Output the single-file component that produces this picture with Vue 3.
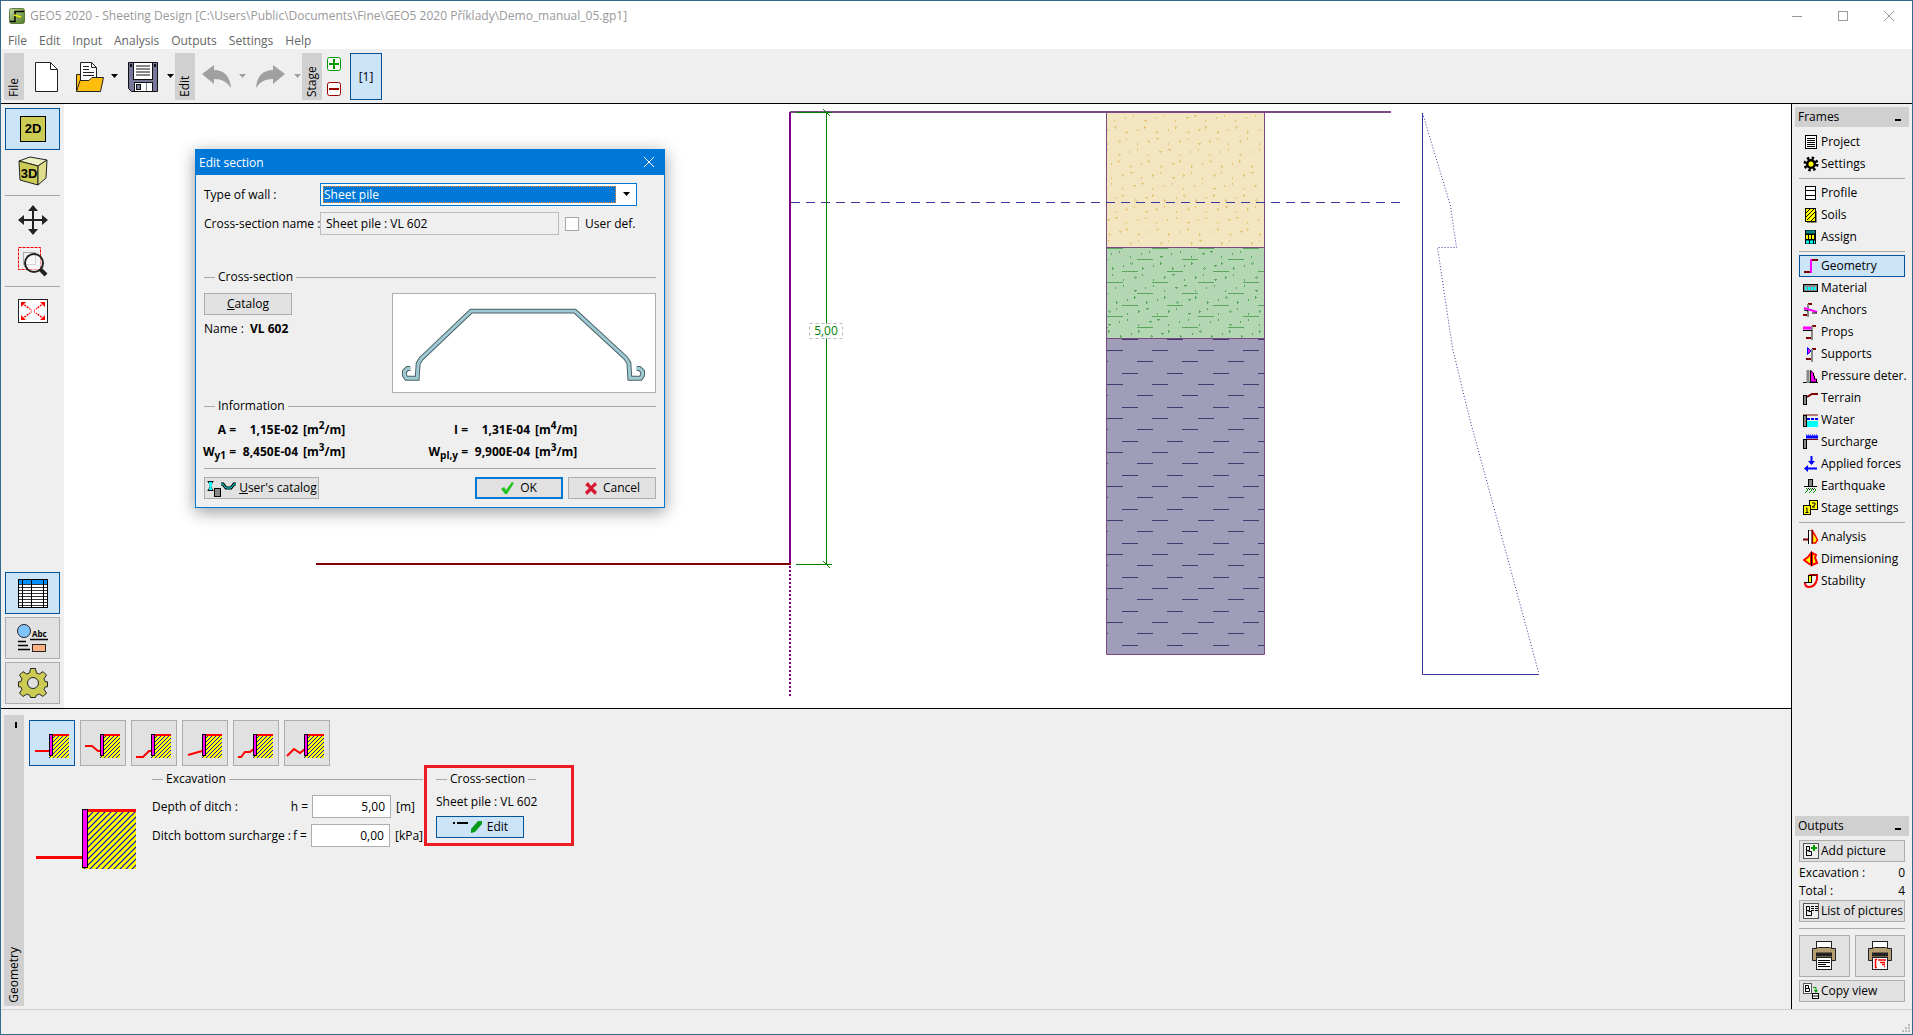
<script setup>
import { ref } from 'vue'

const menus = ['File', 'Edit', 'Input', 'Analysis', 'Outputs', 'Settings', 'Help']

const frames = [
  [
    { name: 'Project', icon: '<rect x="2.5" y="1.5" width="11" height="13" fill="#fff" stroke="#000"/><path d="M4 4.5h8M4 6.5h8M4 8.5h8M4 10.5h8M4 12.5h8" stroke="#000"/>' },
    { name: 'Settings', icon: '<circle cx="8" cy="8" r="6" fill="none" stroke="#000" stroke-width="3" stroke-dasharray="2.4 2.3"/><circle cx="8" cy="8" r="3.8" fill="#ff0" stroke="#000" stroke-width="2.5"/>' },
  ],
  [
    { name: 'Profile', icon: '<rect x="2.5" y="1.5" width="10" height="13" fill="#fff" stroke="#000"/><path d="M3 5.5h9M3 10.5h9" stroke="#000"/>' },
    { name: 'Soils', icon: '<path d="M4 15.5h9.5V4" stroke="#888" fill="none"/><rect x="2.5" y="1.5" width="10" height="13" fill="#ff0" stroke="#000"/><path d="M3 6l4-4M3 10l8-8M4 13l8-8M8 14l4-4" stroke="#000"/>' },
    { name: 'Assign', icon: '<rect x="2.5" y="1.5" width="10" height="13" fill="#000" stroke="#000"/><path d="M3 3h9" stroke="#088" stroke-width="3"/><path d="M3 8h9" stroke="#ff0" stroke-width="4" stroke-dasharray="2 1"/><path d="M3 13h9" stroke="#0ff" stroke-width="3" stroke-dasharray="3 1"/>' },
  ],
  [
    { name: 'Geometry', icon: '<path d="M1 14h6M9 2h6" stroke="#800000" stroke-width="2"/><path d="M8 1v14" stroke="#f0f" stroke-width="2"/>' },
    { name: 'Material', icon: '<rect x="0.5" y="4.5" width="14" height="7" fill="#888" stroke="#000"/><path d="M2 8.5h12" stroke="#0ff" stroke-width="3" stroke-dasharray="2 1"/>' },
    { name: 'Anchors', icon: '<path d="M0 13h5M5 2h4" stroke="#800000" stroke-width="2"/><path d="M5 2v13" stroke="#888" stroke-width="2"/><path d="M1 6l13 4" stroke="#f0f" stroke-width="2"/><path d="M1 8l4 1M9 11h5" stroke="#000"/>' },
    { name: 'Props', icon: '<path d="M3 14h5M9 2h4" stroke="#800000" stroke-width="2"/><path d="M9 2v14" stroke="#888" stroke-width="2"/><path d="M0 4h8" stroke="#f0f" stroke-width="3"/><path d="M0 6.5h9" stroke="#000"/>' },
    { name: 'Supports', icon: '<path d="M3 13h5M9 3h4" stroke="#800000" stroke-width="2"/><path d="M9 3v13" stroke="#888" stroke-width="2"/><path d="M4.5 1.5v7L8 5z" fill="#f0f" stroke="#00f"/>' },
    { name: 'Pressure deter.', icon: '<path d="M0 14.5h15" stroke="#000"/><path d="M5 2v13" stroke="#888" stroke-width="3"/><path d="M7.5 2.5V14h6v-3h-2V8h-1V5z" fill="#f0f" stroke="#000"/>' },
    { name: 'Terrain', icon: '<path d="M4 7l5-3h6" stroke="#800000" stroke-width="2" fill="none"/><rect x="0.5" y="5.5" width="3" height="9" fill="#888" stroke="#000"/>' },
    { name: 'Water', icon: '<path d="M0 3h15" stroke="#800000"/><path d="M4 9h11v6H4z" fill="#0ff"/><path d="M4 7h11" stroke="#00f" stroke-width="2" stroke-dasharray="3 1"/><rect x="0.5" y="3.5" width="3" height="11" fill="#888" stroke="#000"/>' },
    { name: 'Surcharge', icon: '<path d="M3 3h12" stroke="#00f" stroke-width="3"/><path d="M3 1h12" stroke="#00f" stroke-dasharray="1 1"/><path d="M3 5.5h12" stroke="#800000"/><rect x="0.5" y="5.5" width="3" height="9" fill="#888" stroke="#000"/>' },
    { name: 'Applied forces', icon: '<path d="M8.5 0v8M3 12.5h11" stroke="#00f" stroke-width="2"/><path d="M5 5h7L8.5 9zM1 12.5L5 9v7z" fill="#00f"/>' },
    { name: 'Earthquake', icon: '<rect x="5.5" y="1.5" width="4" height="7" fill="#888" stroke="#000"/><path d="M1 8.5h13" stroke="#000"/><path d="M3 10l2 2-3 3M7 10l2 2-3 3M11 10l2 2-3 3" stroke="#090" fill="none"/><path d="M5 10l2 2M9 10l2 2" stroke="#000"/>' },
    { name: 'Stage settings', icon: '<rect x="6.5" y="0.5" width="8" height="9" fill="#ff0" stroke="#000"/><rect x="0.5" y="5.5" width="7" height="9" fill="#ff0" stroke="#000"/><path d="M9 3h3v2l-3 2h3M3 8h1v4M2.5 12.5h3" stroke="#000" fill="none"/>' },
  ],
  [
    { name: 'Analysis', icon: '<path d="M0 10.5h5M5 2.5h5" stroke="#800000" stroke-width="2"/><path d="M5 2h4v13H5z" fill="#fff"/><path d="M5.5 1v14" stroke="#000"/><path d="M9.5 2l3 5 2 4-2 3h-3z" fill="#ff0" stroke="#f00" stroke-width="1.5"/><path d="M9 1v14" stroke="#000"/>' },
    { name: 'Dimensioning', icon: '<path d="M8 2L5 6 1 9l4 3 3 2zM9 2l4 2-1 3 1 2 1 3-5 2z" fill="#ff0" stroke="#f00" stroke-width="2"/><path d="M8.5 1v14" stroke="#000"/>' },
    { name: 'Stability', icon: '<path d="M6 2h8v4c-1 5-3 8-8 8-2 0-4-1-4-4" fill="none" stroke="#f00" stroke-width="2"/><path d="M9 2h5" stroke="#800000" stroke-width="2"/><path d="M1 9.5h5" stroke="#000"/><rect x="5.5" y="2.5" width="3" height="7" fill="#ff0" stroke="#000"/>' },
  ],
]

const shapes = [
  'M5 30H19',
  'M4 25h7l6 5h3',
  'M4 36h7l6-6h2',
  'M5 34l7-2 7-2',
  'M4 36h3l4-5h5l5-4',
  'M2 35l7-7 6 4 5-4h2',
]
const activeShape = ref(0)

const wallType = ref('Sheet pile')
const sectionName = ref('Sheet pile : VL 602')
const userDefined = ref(false)
const depth = ref('5,00')
const surcharge = ref('0,00')

/* Soil column hatching: staggered dashes and grains */
const COLUMN_LEFT = 1107
const COLUMN_RIGHT = 1264

function dashes(top, bottom) {
  const starts = [1107, 1137, 1122]
  let d = ''
  for (let n = 0; ; n++) {
    const y = 248 + Math.round((n * 34) / 3)
    if (y >= bottom) break
    if (y < top) continue
    for (let k = -1; k < 4; k++) {
      const x = starts[n % 3] + Math.round((k * 136) / 3)
      const from = Math.max(x, COLUMN_LEFT)
      const to = Math.min(x + 16, COLUMN_RIGHT)
      if (to > from) d += `M${from} ${y}h${to - from}v1h${from - to}z`
    }
  }
  return d
}

function grains(top, bottom) {
  const rows = [
    [0, 24, 1], [3, 17, 0], [5, 36, 1], [12, 36, 0], [14, 28, 1],
    [17, 17, 0], [23, 17, 0], [25, 39, 0], [28, 28, 0],
  ]
  const px = (x, y, w, h) => `M${x} ${y}h${w}v${h}h${-w}z`
  let d = ''
  for (let k = -1; k < 8; k++) {
    rows.forEach(([dy, dx, big], r) => {
      const y = 126 + k * 34 + dy
      if (y < top + 1 || y > bottom - 3) return
      for (let i = -2; i < 6; i++) {
        const x = 1090 + dx + k * 4 + Math.round(i * 30.3)
        if (x < COLUMN_LEFT || x > COLUMN_RIGHT - 3) continue
        const special = (i + r + k + 8) % 4 === 0
        if (big && special) d += px(x + 1, y, 1, 1) + px(x, y + 1, 1, 1) + px(x + 2, y + 1, 1, 1) + px(x + 1, y + 2, 1, 1)
        else if (big) d += px(x, y, 1, 3) + px(x + 1, y + 1, 1, 1)
        else if (special) d += px(x, y, 3, 1) + px(x + 1, y + 1, 1, 1)
        else d += px(x, y, 1, 2)
      }
    })
  }
  return d
}
</script>

<template>
  <div class="window">
    <svg class="defs" aria-hidden="true">
      <defs>
        <pattern id="hatch-small" width="4" height="4" patternUnits="userSpaceOnUse">
          <rect width="4" height="4" fill="#ff0" />
          <path d="M-1 1l2-2M-1 5l6-6M3 5l2-2" stroke="#00c" />
        </pattern>
        <pattern id="hatch-large" width="6" height="6" patternUnits="userSpaceOnUse">
          <rect width="6" height="6" fill="#ff0" />
          <path d="M-1 1l2-2M-1 7l8-8M5 7l2-2" stroke="#00c" stroke-width="1.2" />
        </pattern>
      </defs>
    </svg>

    <header class="titlebar">
      <svg width="16" height="16" viewBox="0 0 16 16">
        <defs><linearGradient id="app-g" x1="0" x2="1" y1="0" y2="1"><stop offset="0" stop-color="#c4dba0" /><stop offset="1" stop-color="#4d7a22" /></linearGradient></defs>
        <rect x="0.5" y="0.5" width="15" height="15" rx="2" fill="url(#app-g)" stroke="#5f7d3a" />
        <path d="M1 13.500h5V3.500h9" fill="none" stroke="#000" stroke-width="1.500" />
        <path d="M5 7l7 2" stroke="#ee0" stroke-width="1.500" />
      </svg>
      <h1>GEO5 2020 - Sheeting Design [C:\Users\Public\Documents\Fine\GEO5 2020 Příklady\Demo_manual_05.gp1]</h1>
      <div class="window-controls">
        <button type="button" aria-label="Minimize"><svg width="11" height="11"><path d="M0 5.500h10" stroke="#999" /></svg></button>
        <button type="button" aria-label="Maximize"><svg width="11" height="11"><rect x="0.5" y="0.5" width="9" height="9" fill="none" stroke="#999" /></svg></button>
        <button type="button" aria-label="Close"><svg width="11" height="11"><path d="M0 0l10 10M10 0L0 10" stroke="#999" /></svg></button>
      </div>
    </header>

    <nav class="menubar">
      <button v-for="m in menus" :key="m" type="button">{{ m }}</button>
    </nav>

    <div class="toolbar">
      <span class="strip">File</span>
      <button type="button" class="tool new" aria-label="New">
        <svg width="23" height="30"><path d="M0.500 0.500h15l7 7v22h-22z" fill="#fff" stroke="#222" /><path d="M15.500 0.500v7h7" fill="none" stroke="#222" /></svg>
      </button>
      <button type="button" class="tool open" aria-label="Open">
        <svg width="28" height="30">
          <path d="M0.500 29V12.500h6l2 3h18V20" fill="#ffbe0d" stroke="#222" />
          <path d="M4.500 19V0.500h11l5 5V17l-8 3z" fill="#fff" stroke="#222" /><path d="M15.500 0.500v5h5M7 4.500h6M7 7.500h6M7 10.500h11M7 13.500h11" fill="none" stroke="#222" />
          <path d="M4 18.500h9l3-3h11.500L24.500 29.500H0.500z" fill="#ffbe0d" stroke="#222" />
        </svg>
      </button>
      <button type="button" class="caret" aria-label="Recent files"><svg width="7" height="5"><path d="M0 0h7L3.500 4z" /></svg></button>
      <button type="button" class="tool save" aria-label="Save">
        <svg width="30" height="30">
          <path d="M0.500 0.500h29v29H3.500l-3-3z" fill="#777799" stroke="#111" />
          <rect x="5.500" y="0.500" width="19" height="17" fill="#fff" stroke="#111" />
          <path d="M8 4h14M8 7h14M8 10h14M8 13h14" stroke="#111" /><path d="M2 2h2v3H2zM26 2h2v3h-2z" fill="#111" />
          <rect x="6.500" y="20.500" width="18" height="9" fill="#fff" stroke="#111" /><rect x="8.500" y="22.500" width="4" height="5" fill="#779" stroke="#111" /><path d="M18.500 21v8" stroke="#779" />
        </svg>
      </button>
      <button type="button" class="caret" aria-label="Save options"><svg width="7" height="5"><path d="M0 0h7L3.500 4z" /></svg></button>
      <span class="strip">Edit</span>
      <button type="button" class="tool undo" aria-label="Undo" disabled>
        <svg width="29" height="24"><path d="M0 9L12 0v5c10 0 16 6 17 18-4-6-9-9-17-9v5z" fill="#a0a0a0" /></svg>
      </button>
      <button type="button" class="caret" aria-label="Undo list" disabled><svg width="7" height="5"><path d="M0 0h7L3.500 4z" /></svg></button>
      <button type="button" class="tool redo" aria-label="Redo" disabled>
        <svg width="29" height="24"><path d="M29 9L17 0v5C7 5 1 11 0 23c4-6 9-9 17-9v5z" fill="#a0a0a0" /></svg>
      </button>
      <button type="button" class="caret" aria-label="Redo list" disabled><svg width="7" height="5"><path d="M0 0h7L3.500 4z" /></svg></button>
      <span class="strip">Stage</span>
      <div class="stage-edit">
        <button type="button" aria-label="Add stage"><svg width="14" height="14"><rect x="0.5" y="0.5" width="13" height="13" rx="2" fill="#fff" stroke="#090" /><path d="M2 7h10M7 2v10" stroke="#090" stroke-width="2" /></svg></button>
        <button type="button" aria-label="Remove stage"><svg width="14" height="14"><rect x="0.5" y="0.5" width="13" height="13" rx="2" fill="#fff" stroke="#900" /><path d="M2 7h10" stroke="#900" stroke-width="2" /></svg></button>
      </div>
      <button type="button" class="stage active">[1]</button>
    </div>

    <div class="main">
      <div class="center">
        <div class="workspace">
          <aside class="view-tools">
            <button type="button" class="framed active" aria-label="2D view">
              <svg width="26" height="26"><rect x="0.5" y="0.5" width="25" height="25" fill="#cc5" stroke="#000" /><text x="13" y="17" text-anchor="middle" class="cube-label">2D</text></svg>
            </button>
            <button type="button" aria-label="3D view">
              <svg width="30" height="30"><path d="M1 5l11-4 17 3-9 6z" fill="#efefc4" stroke="#222" /><path d="M1 5l19 5v19L2 24z" fill="#cc5" stroke="#222" /><path d="M20 10l9-6-1 18-8 7z" fill="#dfdf8c" stroke="#222" /><text x="11" y="22" text-anchor="middle" class="cube-label">3D</text></svg>
            </button>
            <hr>
            <button type="button" aria-label="Move view">
              <svg width="30" height="30"><path d="M3 15h24M15 3v24" stroke="#222" stroke-width="2" /><path d="M15 0l5 6H10zM15 30l5-6H10zM0 15l6-5v10zM30 15l-6-5v10z" fill="#222" /></svg>
            </button>
            <button type="button" aria-label="Zoom to region">
              <svg width="30" height="30"><rect x="0.5" y="0.5" width="22" height="22" fill="none" stroke="#f00" stroke-dasharray="3 1" /><rect x="5.500" y="5.500" width="12" height="12" fill="none" stroke="#aaa" /><circle cx="16" cy="16" r="9" fill="#fff" fill-opacity="0.5" stroke="#222" stroke-width="2" /><path d="M22 22l6 6" stroke="#222" stroke-width="4" /></svg>
            </button>
            <hr>
            <button type="button" aria-label="Fit view">
              <svg width="30" height="24"><rect x="0.5" y="0.5" width="29" height="23" fill="#fff" stroke="#222" /><path d="M4 4l8 6M26 4l-8 6M4 20l8-6M26 20l-8-6" stroke="#f00" stroke-width="1.500" stroke-dasharray="2 1" /><path d="M3 3h5L3 8zM27 3h-5l5 5zM3 21h5l-5-5zM27 21h-5l5-5z" fill="#f00" /><path d="M13 10v4M16.500 10v4" stroke="#f66" /></svg>
            </button>
            <div class="view-bottom">
              <button type="button" class="framed active" aria-label="Table">
                <svg width="30" height="29"><rect x="0.5" y="0.5" width="29" height="28" fill="#fff" stroke="#000" /><path d="M1 3h28" stroke="#0090ff" stroke-width="4" /><path d="M1 5.500h28M1 8.500h28M1 11.500h28M1 14.500h28M1 17.500h28M1 20.500h28M1 23.500h28M1 26.500h28" stroke="#333" /><path d="M4.500 0v29M13.500 0v29M25.500 0v29" stroke="#000" /></svg>
              </button>
              <button type="button" class="framed" aria-label="Descriptions">
                <svg width="32" height="28"><circle cx="7" cy="7" r="6.500" fill="#80c4ff" stroke="#222" /><text x="15" y="13" class="abc">Abc</text><path d="M13 15.500h18M1 17.500h8M1 21.500h10M1 25.500h12" stroke="#000" stroke-width="1.500" /><rect x="15.500" y="20.500" width="13" height="7" fill="#ffb080" stroke="#222" /></svg>
              </button>
              <button type="button" class="framed" aria-label="View settings">
                <svg width="30" height="30" viewBox="-15 -15 30 30">
                  <g fill="#cc5" stroke="#222">
                    <path d="M-2.500-14.500h5l.8 4.300 3 1.300 3.700-2.500 3.500 3.500-2.500 3.700 1.300 3h2.200v5l-2.200.1-1.300 2.500 2.500 3.600-3.500 3.500-3.700-2.500-3 1.300-.8 2.200h-5l-.8-2.200-3-1.300-3.700 2.500-3.500-3.500 2.500-3.600-1.300-2.500-2.200-.1v-5h2.200l1.300-3-2.500-3.700 3.500-3.500 3.700 2.500 3-1.300z" />
                    <circle r="5.500" fill="#e1e1e1" />
                  </g>
                </svg>
              </button>
            </div>
          </aside>

          <main class="canvas">
            <svg class="drawing" viewBox="64 104 1727 596" preserveAspectRatio="xMinYMin meet">
              <path d="M790 112H1391" stroke="#7b4a82" stroke-width="2" />
              <path d="M1107 113h157v134h-157z" fill="#f3e5c0" />
              <path d="M1107 247h157v91h-157z" fill="#b3d6b3" />
              <path d="M1107 338h157v316h-157z" fill="#9f9db8" />
              <path :d="grains(113, 247)" fill="#e4c470" />
              <path :d="grains(248, 338)" fill="#5aa65a" />
              <path :d="dashes(248, 338)" fill="#5aa65a" />
              <path :d="dashes(339, 654)" fill="#3f3b72" />
              <path d="M1106.500 113v541.500h158v-541.500M1107 247.500h157M1107 338.500h157" fill="none" stroke="#7b4a82" />
              <path d="M791 202.500H1400" stroke="#3838a0" stroke-dasharray="9 6" />
              <path d="M790 112V564" stroke="#800080" stroke-width="2" />
              <path d="M790 566V697" stroke="#800080" stroke-width="2" stroke-dasharray="2 2" />
              <path d="M316 564H791" stroke="#800000" stroke-width="2" />
              <path d="M796 112.500h36M796 564.500h36M826.500 112v212M826.500 337v228M823 109l7 7M823 561l7 7" stroke="#008000" fill="none" />
              <rect x="809.500" y="323.500" width="33" height="15" fill="#fff" stroke="#bbb" stroke-dasharray="3 3" />
              <text x="826" y="335" text-anchor="middle" class="dimension">5,00</text>
              <path d="M1422.500 113V674.500H1539" fill="none" stroke="#3838a0" />
              <path d="M1422.500 113L1450.500 206L1456.500 247.500H1437.500L1452.500 348L1469 416L1539 674" fill="none" stroke="#3838a0" stroke-dasharray="1 2" />
            </svg>

            <section class="dialog" role="dialog" aria-labelledby="dialog-title">
              <header>
                <h2 id="dialog-title">Edit section</h2>
                <button type="button" aria-label="Close"><svg width="11" height="11"><path d="M0 0l10 10M10 0L0 10" stroke="#fff" /></svg></button>
              </header>
              <div class="dialog-body">
                <div class="row">
                  <label class="name-label" for="wall-type">Type of wall :</label>
                  <div class="combo">
                    <select id="wall-type" v-model="wallType"><option>Sheet pile</option></select>
                    <svg width="7" height="5"><path d="M0 0h7L3.500 4z" /></svg>
                  </div>
                </div>
                <div class="row">
                  <label class="name-label" for="section-name">Cross-section name :</label>
                  <input id="section-name" v-model="sectionName" class="readonly" type="text" readonly>
                  <label class="check"><input v-model="userDefined" type="checkbox">User def.</label>
                </div>
                <h3 class="legend first">Cross-section</h3>
                <div class="section-row">
                  <div>
                    <button type="button" class="btn catalog"><span><u>C</u>atalog</span></button>
                    <p>Name :&nbsp; <b>VL 602</b></p>
                  </div>
                  <svg class="profile" width="264" height="100" viewBox="0 0 264 100">
                    <g fill="none">
                      <path d="M16 76h-3l-3 3v4l2 3h11l1-15 3-5L78 17.500h106l52 48 3 5 1 15.500h11l2-3v-4l-3-3h-3" stroke="#4a5f66" stroke-width="5" />
                      <path d="M16 76h-3l-3 3v4l2 3h11l1-15 3-5L78 17.500h106l52 48 3 5 1 15.500h11l2-3v-4l-3-3h-3" stroke="#9fcad3" stroke-width="3" />
                    </g>
                  </svg>
                </div>
                <h3 class="legend">Information</h3>
                <dl class="info">
                  <dt>A =</dt><dd>1,15E-02</dd><dd class="unit">[m<sup>2</sup>/m]</dd>
                  <dt>I =</dt><dd>1,31E-04</dd><dd class="unit">[m<sup>4</sup>/m]</dd>
                  <dt>W<sub>y1</sub> =</dt><dd>8,450E-04</dd><dd class="unit">[m<sup>3</sup>/m]</dd>
                  <dt>W<sub>pl,y</sub> =</dt><dd>9,900E-04</dd><dd class="unit">[m<sup>3</sup>/m]</dd>
                </dl>
                <footer>
                  <button type="button" class="btn users">
                    <svg width="30" height="17"><path d="M1.500 1.500h6M1.500 10.500h6M2.500 2l4 8M6.500 2l-4 8" stroke="#000" /><path d="M3 2h3v3l-1 1 1 3v1H3V9l1-3-1-1z" fill="#0ff" /><rect x="8.500" y="8.500" width="6" height="8" fill="#888" stroke="#000" /><path d="M15 4h2l3 4h5l3-4h2" stroke="#000" stroke-width="3" fill="none" /><path d="M15 4h2l3 4h5l3-4h2" stroke="#0ff" fill="none" /></svg>
                    <span><u>U</u>ser's catalog</span>
                  </button>
                  <button type="button" class="btn ok"><svg width="14" height="12"><path d="M0 7l3-2 2 3 6-8 2 1-7 11H4z" fill="#22c322" /></svg><span>OK</span></button>
                  <button type="button" class="btn cancel"><svg width="14" height="13"><path d="M1 3l3-3 3 4 4-4 2 3-4 3 4 4-2 3-4-4-4 4-2-3 4-4z" fill="#d81830" /></svg><span>Cancel</span></button>
                </footer>
              </div>
            </section>
          </main>
        </div>

        <section class="panel">
          <div class="panel-tab"><i></i><span>Geometry</span></div>
          <div class="panel-content">
            <div class="shapes">
              <button v-for="(s, i) in shapes" :key="s" type="button" :class="{ active: i === activeShape }" :aria-label="'Bottom shape ' + (i + 1)" @click="activeShape = i">
                <svg width="44" height="44">
                  <rect x="19" y="15" width="20" height="22" fill="url(#hatch-small)" />
                  <path d="M23 14h16" stroke="#f00" stroke-width="2" /><path :d="s" fill="none" stroke="#f00" stroke-width="2" />
                  <rect x="19.500" y="13.500" width="3" height="21" fill="#f0f" stroke="#000" />
                </svg>
              </button>
            </div>
            <div class="form">
              <svg class="scheme" width="100" height="61">
                <rect x="46" y="3" width="54" height="57" fill="url(#hatch-large)" />
                <path d="M52 1.500h48M0 48.500h46" stroke="#f00" stroke-width="3" />
                <rect x="46.500" y="0.5" width="5" height="58" fill="#f0f" stroke="#000" />
              </svg>
              <div class="excavation">
                <h3 class="legend">Excavation</h3>
                <div class="field"><label for="depth"><span>Depth of ditch :</span><span>h =</span></label><input id="depth" v-model="depth" type="text"><span>[m]</span></div>
                <div class="field"><label for="surcharge"><span>Ditch bottom surcharge :</span><span>f =</span></label><input id="surcharge" v-model="surcharge" type="text"><span>[kPa]</span></div>
              </div>
              <div class="cross">
                <h3 class="legend">Cross-section</h3>
                <p>Sheet pile : VL 602</p>
                <button type="button" class="btn edit"><svg width="30" height="14"><path d="M1 3h2M5 3h11" stroke="#000" stroke-width="2" /><path d="M19 13v-4l7-8h4v3l-7 8z" fill="#0a9a1a" /></svg><span>Edit</span></button>
              </div>
            </div>
          </div>
        </section>
      </div>

      <aside class="side">
        <h2 class="side-head">Frames<i></i></h2>
        <nav class="frames">
          <div v-for="(group, g) in frames" :key="g" class="group">
            <button v-for="f in group" :key="f.name" type="button" :class="{ active: f.name === 'Geometry' }">
              <svg width="16" height="16" v-html="f.icon"></svg>{{ f.name }}
            </button>
          </div>
        </nav>
        <h2 class="side-head">Outputs<i></i></h2>
        <div class="outputs">
          <button type="button" class="btn left"><svg width="16" height="16"><rect x="0.5" y="0.5" width="15" height="15" fill="#eee" stroke="#555" /><path d="M3.500 3v10M3.500 3.500h3v4h-3M3.500 12.500h5v-4h-3" fill="none" stroke="#000" /><path d="M11 2v6M8 5h6" stroke="#090" stroke-width="2" /></svg><span>Add picture</span></button>
          <p><span>Excavation :</span><span>0</span></p>
          <p><span>Total :</span><span>4</span></p>
          <button type="button" class="btn left"><svg width="16" height="16"><rect x="0.5" y="0.5" width="15" height="15" fill="#eee" stroke="#555" /><path d="M3.500 3v10M3.500 3.500h3v4h-3M3.500 12.500h5v-4h-3" fill="none" stroke="#000" /><path d="M8 3.500h7M8 5.500h7M8 7.500h7" stroke="#000" stroke-dasharray="3 1" /></svg><span>List of pictures</span></button>
          <hr>
          <div class="prints">
            <button v-for="kind in ['Print report', 'Print picture']" :key="kind" type="button" :aria-label="kind">
              <svg width="24" height="30">
                <rect x="4.500" y="0.5" width="15" height="10" fill="#fff" stroke="#222" />
                <path d="M0.500 19.500v-12h4l2-1h11l2 1h4v12z" fill="#b89f72" stroke="#222" /><path d="M4 13.500h16" stroke="#222" stroke-width="4" />
                <rect x="4.500" y="16.500" width="15" height="12" fill="#fff" stroke="#222" />
                <path v-if="kind === 'Print report'" d="M6 19.500h12M6 21.500h12M6 23.500h8M6 25.500h12" stroke="#000" />
                <path v-else d="M9 18.500H7.500v8H9M10 19h8M12 21.500h5M14 23.500h3M16 25.500h1" fill="none" stroke="#f00" stroke-width="1.500" />
              </svg>
            </button>
          </div>
          <button type="button" class="btn left copy"><svg width="16" height="16"><rect x="0.5" y="0.5" width="8" height="10" fill="#fff" stroke="#555" /><path d="M2.500 2v7M2.500 2.500h3v3h-3M2.500 8.500h4v-3h-2" fill="none" stroke="#000" /><path d="M10 4.500h3V9" fill="none" stroke="#090" /><path d="M11 7h4l-2 3z" fill="#090" /><rect x="9.500" y="10.500" width="6" height="5" fill="#fff" stroke="#000" /><path d="M9 13h7" stroke="#000" /></svg><span>Copy view</span></button>
        </div>
      </aside>
    </div>

    <footer class="statusbar">
      <svg width="8" height="8"><path d="M6 0h2v2H6zM3 3h2v2H3zM6 3h2v2H6zM0 6h2v2H0zM3 6h2v2H3zM6 6h2v2H6z" fill="#bbb" /></svg>
    </footer>
  </div>
</template>

<style>
body {
  margin: 0;
}
</style>

<style scoped>
*,
*::before,
*::after {
  box-sizing: border-box;
}
.window {
  display: flex;
  flex-direction: column;
  min-height: 100vh;
  border: 1px solid #38688a;
  background: #efefef;
  color: #000;
  font: 12px/16px "Open Sans", "Noto Sans", sans-serif;
}
.defs {
  position: absolute;
  width: 0;
  height: 0;
}
svg {
  display: block;
  flex: none;
}
h1, h2, h3, p, dl, dd {
  margin: 0;
  font: inherit;
}
button, input, select {
  margin: 0;
  padding: 0;
  border: 0;
  background: none;
  color: inherit;
  font: inherit;
  white-space: nowrap;
}
hr {
  width: 100%;
  height: 1px;
  margin: 3px 0;
  border: 0;
  background: #a8a8a8;
}
.titlebar {
  display: flex;
  align-items: center;
  gap: 5px;
  height: 30px;
  padding-left: 8px;
  background: #fff;
  color: #999;
}
.window-controls {
  display: flex;
  margin-left: auto;
}
.window-controls button {
  display: flex;
  align-items: center;
  justify-content: center;
  width: 46px;
  height: 28px;
}
.menubar {
  display: flex;
  gap: 12px;
  height: 18px;
  padding: 1px 0 0 7px;
  background: #fff;
  color: #666;
}
.toolbar {
  display: flex;
  align-items: center;
  height: 55px;
  padding: 1px 3px 0;
  border-bottom: 1px solid #000;
}
.toolbar button {
  display: flex;
  align-items: center;
  justify-content: center;
}
.strip {
  width: 20px;
  height: 47px;
  padding-top: 3px;
  background: #d0d0d0;
  line-height: 20px;
  writing-mode: vertical-rl;
  transform: rotate(180deg);
}
.tool {
  height: 47px;
}
.tool.new { width: 45px; }
.tool.open { width: 41px; }
.tool.save { width: 47px; }
.tool.undo { width: 43px; }
.tool.redo { width: 46px; }
.caret {
  width: 9px;
  height: 47px;
}
.caret:disabled {
  fill: #a0a0a0;
}
.stage-edit {
  display: flex;
  flex-direction: column;
  gap: 11px;
  margin: 0 9px 0 5px;
}
.stage {
  width: 32px;
  height: 47px;
}
.active,
.toolbar .active {
  border: 1px solid #00549c;
  background: #cce4f8;
}
.main {
  display: flex;
  flex: 1;
}
.center {
  display: flex;
  flex: 1;
  flex-direction: column;
  min-width: 0;
}
.workspace {
  display: flex;
  flex: 1;
}
.view-tools {
  display: flex;
  flex-direction: column;
  width: 63px;
  padding: 4px;
}
.view-tools button {
  display: flex;
  align-items: center;
  justify-content: center;
  width: 100%;
  height: 42px;
}
.framed {
  border: 1px solid #adadad;
  background: #e1e1e1;
}
.framed.active {
  border-color: #00549c;
  background: #cce4f8;
}
.view-bottom {
  display: flex;
  flex-direction: column;
  gap: 3px;
  margin-top: auto;
}
.cube-label {
  font: bold 13px "Liberation Sans", sans-serif;
}
.abc {
  font: bold 8px "Open Sans", sans-serif;
}
.canvas {
  position: relative;
  flex: 1;
  min-width: 0;
  background: #fff;
}
.drawing {
  width: 100%;
}
.dimension {
  fill: #008000;
  font: 12px "Open Sans", sans-serif;
}
.dialog {
  position: absolute;
  top: 45px;
  left: 131px;
  width: 470px;
  border: 1px solid #0078d7;
  background: #efefef;
  box-shadow: 0 4px 16px rgba(0, 0, 0, 0.4);
}
.dialog > header {
  display: flex;
  align-items: center;
  justify-content: space-between;
  height: 25px;
  padding: 0 9px 0 3px;
  background: #0078d7;
  color: #fff;
}
.dialog-body {
  padding: 8px;
}
.row {
  display: flex;
  align-items: center;
  height: 23px;
  margin-bottom: 6px;
}
.name-label {
  width: 116px;
  white-space: nowrap;
}
.combo {
  display: flex;
  align-items: center;
  gap: 7px;
  width: 317px;
  height: 23px;
  padding: 2px 6px 2px 2px;
  border: 1px solid #0078d7;
  background: #fff;
}
.combo select {
  flex: 1;
  height: 17px;
  border: 1px dotted #ff8728;
  background: #0078d7;
  color: #fff;
  line-height: 15px;
  appearance: none;
}
.readonly {
  width: 239px;
  height: 23px;
  padding: 0 5px;
  border: 1px solid #bcbcbc;
}
.check {
  display: flex;
  align-items: center;
  gap: 6px;
  margin-left: 6px;
}
.check input {
  width: 14px;
  height: 14px;
  border: 1px solid #a8a8a8;
  background: #fff;
  appearance: none;
}
.check input:checked {
  background: #0078d7;
}
.legend {
  display: flex;
  align-items: center;
  gap: 3px;
  height: 16px;
}
.legend::before,
.legend::after {
  width: 11px;
  height: 1px;
  background: #a8a8a8;
  content: "";
}
.legend::after {
  flex: 1;
}
.legend.first {
  margin-top: 34px;
}
.section-row {
  display: flex;
  justify-content: space-between;
  margin: 8px 0 5px;
}
.section-row p {
  margin-top: 6px;
}
.btn {
  display: flex;
  align-items: center;
  justify-content: center;
  gap: 5px;
  height: 22px;
  border: 1px solid #adadad;
  background: #e1e1e1;
}
.catalog,
.ok,
.cancel,
.edit {
  width: 88px;
}
.profile {
  border: 1px solid #adadad;
  background: #fff;
}
.info {
  display: grid;
  grid-template-columns: 32px 62px 138px 32px 62px auto;
  grid-auto-rows: 22px;
  align-items: center;
  padding: 5px 0;
  font-weight: bold;
  white-space: nowrap;
}
.info dt,
.info dd {
  display: block;
  text-align: right;
}
.info dt {
  justify-self: end;
}
.info .unit {
  padding-left: 5px;
  text-align: left;
}
.info sup,
.info sub {
  font-size: 10px;
  line-height: 0;
}
.dialog footer {
  display: flex;
  gap: 5px;
  padding-top: 8px;
  border-top: 1px solid #a8a8a8;
}
.users {
  gap: 3px;
  width: 115px;
  margin-right: auto;
}
.ok {
  border: 2px solid #0078d7;
}
.panel {
  display: flex;
  min-height: 301px;
  padding: 6px 3px 3px;
  border-top: 1px solid #000;
}
.panel-tab {
  display: flex;
  flex-direction: column;
  align-items: center;
  justify-content: space-between;
  width: 20px;
  padding: 7px 0 3px;
  background: #d0d0d0;
}
.panel-tab i {
  width: 2px;
  height: 6px;
  margin-left: 4px;
  background: #000;
}
.panel-tab span {
  writing-mode: vertical-rl;
  transform: rotate(180deg);
}
.panel-content {
  flex: 1;
  padding: 5px;
}
.shapes {
  display: flex;
  gap: 5px;
}
.shapes button {
  border: 1px solid #adadad;
  background: #e1e1e1;
}
.shapes .active {
  border-color: #00549c;
  background: #cce4f8;
}
.form {
  display: flex;
  align-items: flex-start;
  padding: 5px 0 0 7px;
}
.scheme {
  margin: 38px 16px 0 0;
}
.excavation {
  width: 271px;
}
.excavation .legend {
  margin-bottom: 8px;
}
.field {
  display: flex;
  align-items: center;
  margin-bottom: 6px;
  white-space: nowrap;
}
.field label {
  display: flex;
  justify-content: space-between;
  width: 156px;
}
.field input {
  width: 79px;
  height: 23px;
  margin: 0 5px 0 4px;
  padding: 0 5px;
  border: 1px solid #adadad;
  background: #fff;
  text-align: right;
}
.cross {
  position: relative;
  width: 100px;
  margin-left: 13px;
  white-space: nowrap;
}
.cross::before {
  position: absolute;
  top: -6px;
  left: -12px;
  width: 150px;
  height: 81px;
  border: 3px solid #ed1c24;
  content: "";
  pointer-events: none;
}
.cross p {
  margin: 7px 0 6px;
}
.edit {
  border-color: #00549c;
  background: #cce4f8;
}
.side {
  display: flex;
  flex-direction: column;
  width: 121px;
  padding: 3px 3px 7px;
  border-left: 1px solid #000;
}
.side-head {
  display: flex;
  align-items: center;
  justify-content: space-between;
  height: 20px;
  padding: 0 8px 0 3px;
  background: #d0d0d0;
}
.side-head i {
  width: 6px;
  height: 2px;
  margin-top: 6px;
  background: #000;
}
.frames {
  flex: 1;
  padding: 4px;
}
.group + .group {
  margin-top: 3px;
  padding-top: 3px;
  border-top: 1px solid #a8a8a8;
}
.group button {
  display: flex;
  align-items: center;
  gap: 2px;
  width: 100%;
  height: 22px;
  padding-left: 3px;
  border: 1px solid transparent;
}
.group .active {
  border-color: #00549c;
}
.outputs {
  display: flex;
  flex-direction: column;
  padding: 4px 4px 0;
}
.outputs p {
  display: flex;
  justify-content: space-between;
  line-height: 18px;
}
.outputs p:first-of-type {
  margin-top: 2px;
}
.outputs hr {
  margin: 6px 0;
}
.left {
  justify-content: flex-start;
  gap: 2px;
  padding-left: 3px;
}
.prints {
  display: flex;
  gap: 5px;
  margin-bottom: 3px;
}
.prints button {
  display: flex;
  flex: 1;
  align-items: center;
  justify-content: center;
  height: 42px;
  border: 1px solid #adadad;
  background: #e1e1e1;
}
.statusbar {
  display: flex;
  align-items: flex-end;
  justify-content: flex-end;
  height: 25px;
  padding: 2px;
  border-top: 1px solid #d0d0d0;
}
</style>
